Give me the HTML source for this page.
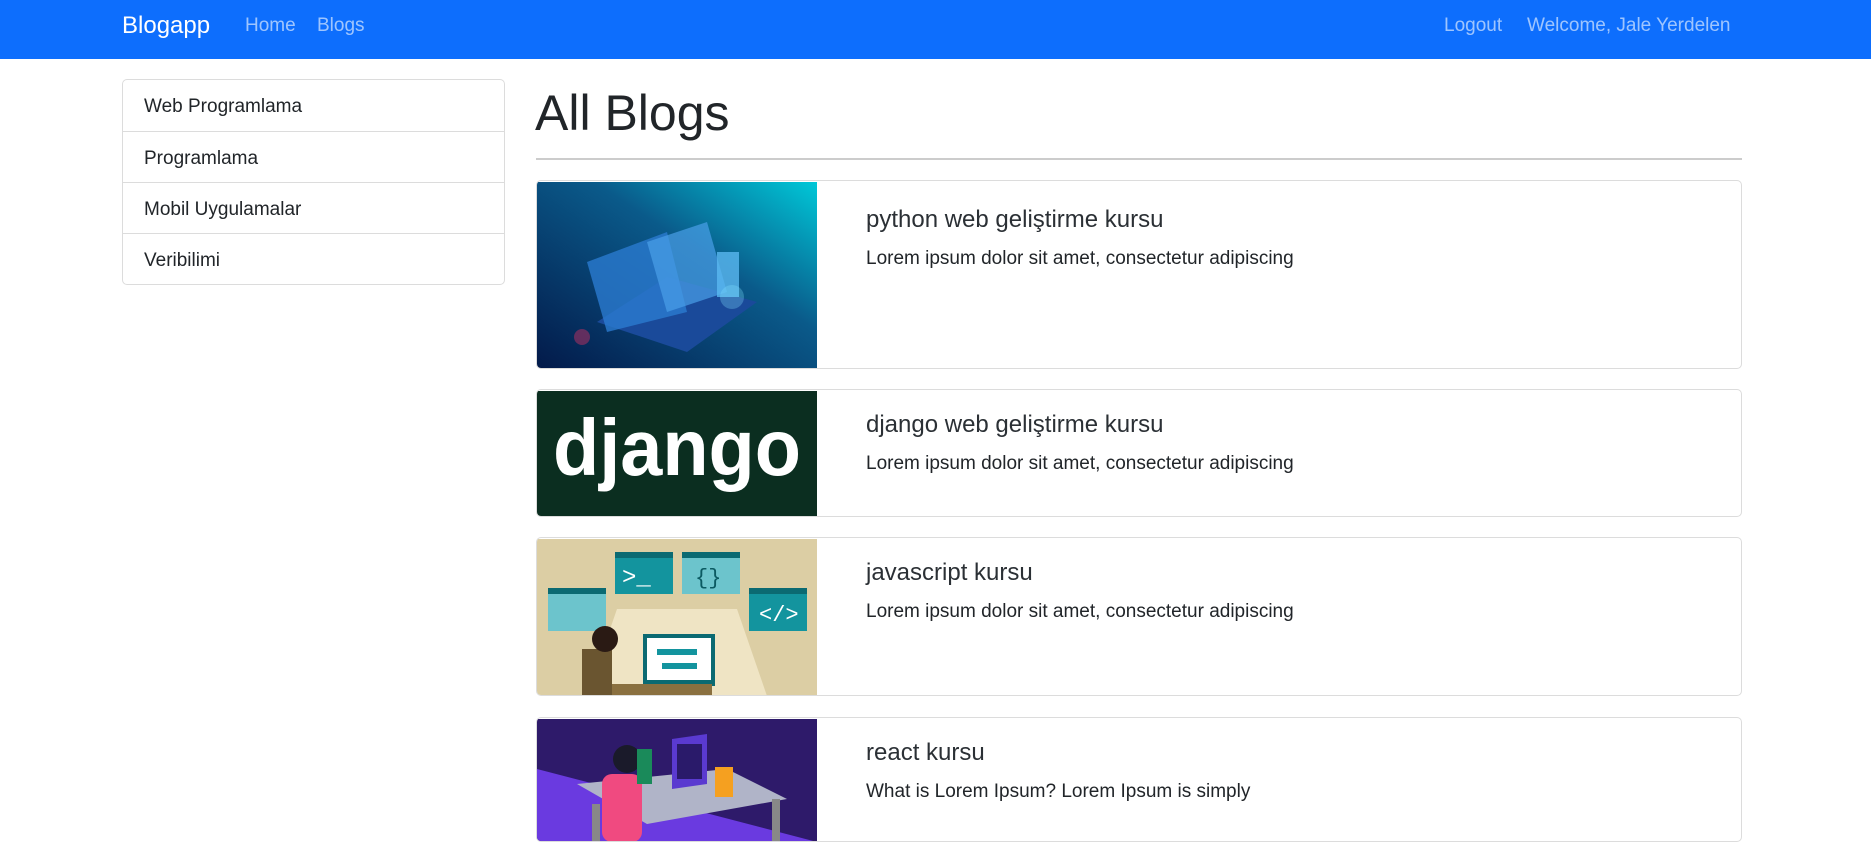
<!DOCTYPE html>
<html><head><meta charset="utf-8"><style>
*{box-sizing:border-box;margin:0;padding:0}
body{width:1871px;height:859px;overflow:hidden;background:#fff;font-family:"Liberation Sans",sans-serif;color:#212529;position:relative}
.nav{position:absolute;left:0;top:0;width:1871px;height:59px;background:#0d6efd}
.nav span{position:absolute;top:15px;font-size:19px;color:rgba(255,255,255,.6);white-space:nowrap}
.nav .brand{font-size:24px;color:#fff;top:12px}
.list{position:absolute;left:122px;top:79px;width:383px;border:1px solid #dcdcdc;border-radius:5px}
.list div{height:51px;line-height:53px;padding-left:21px;font-size:19px;border-top:1px solid #dcdcdc}
.list div:first-child{border-top:none}
h1{position:absolute;left:535px;top:84px;font-size:50px;font-weight:normal}
.hr{position:absolute;left:536px;top:158px;width:1206px;height:2px;background:#ccc}
.card{position:absolute;left:536px;width:1206px;border:1px solid #dcdcdc;border-radius:5px;overflow:hidden}
.card svg{position:absolute;left:0;top:1px}
.card h5{position:absolute;left:329px;font-size:24px;font-weight:normal;color:#2b3035}
.card p{position:absolute;left:329px;font-size:19px}
</style></head><body>
<div class="nav">
<span class="brand" style="left:122px">Blogapp</span>
<span style="left:245px">Home</span>
<span style="left:317px">Blogs</span>
<span style="left:1444px">Logout</span>
<span style="left:1527px">Welcome, Jale Yerdelen</span>
</div>
<div class="list"><div>Web Programlama</div><div>Programlama</div><div>Mobil Uygulamalar</div><div>Veribilimi</div></div>
<h1>All Blogs</h1>
<div class="hr"></div>

<div class="card" style="top:180px;height:189px">
<svg width="280" height="186"><defs><linearGradient id="g1" x1="0" y1="1" x2="1" y2="0"><stop offset="0" stop-color="#031a4a"/><stop offset="0.6" stop-color="#0a5a8a"/><stop offset="1" stop-color="#00c8d8"/></linearGradient></defs>
<rect width="280" height="186" fill="url(#g1)"/>
<polygon points="60,140 150,170 220,120 130,95" fill="#1a4a9a"/>
<polygon points="50,80 130,50 150,130 70,150" fill="#2a7ad0" opacity=".8"/>
<polygon points="110,60 170,40 190,110 130,130" fill="#4aa0e8" opacity=".7"/>
<rect x="180" y="70" width="22" height="45" fill="#5ab8f0" opacity=".8"/>
<circle cx="45" cy="155" r="8" fill="#a03060" opacity=".6"/><circle cx="195" cy="115" r="12" fill="#80e0ff" opacity=".3"/>
</svg>
<h5 style="top:25px">python web geliştirme kursu</h5>
<p style="top:67px">Lorem ipsum dolor sit amet, consectetur adipiscing</p>
</div>

<div class="card" style="top:389px;height:128px">
<svg width="280" height="126"><rect width="280" height="126" fill="#0b2e20"/>
<text x="140" y="84" text-anchor="middle" font-family="Liberation Sans" font-weight="bold" font-size="80" fill="#fff" textLength="248" lengthAdjust="spacingAndGlyphs">django</text></svg>
<h5 style="top:21px">django web geliştirme kursu</h5>
<p style="top:63px">Lorem ipsum dolor sit amet, consectetur adipiscing</p>
</div>

<div class="card" style="top:537px;height:159px">
<svg width="280" height="157"><rect width="280" height="157" fill="#dccea4"/>
<polygon points="80,70 200,70 230,157 50,157" fill="#efe4c4"/>
<rect x="78" y="13" width="58" height="42" fill="#13949e"/><rect x="78" y="13" width="58" height="6" fill="#0b6a72"/>
<text x="85" y="45" font-size="24" fill="#fff" font-family="Liberation Mono">&gt;_</text>
<rect x="145" y="13" width="58" height="42" fill="#6cc4cc"/><rect x="145" y="13" width="58" height="6" fill="#0b6a72"/>
<text x="158" y="45" font-size="22" fill="#0b5a62" font-family="Liberation Mono">{}</text>
<rect x="11" y="49" width="58" height="43" fill="#6cc4cc"/><rect x="11" y="49" width="58" height="6" fill="#0b6a72"/>
<rect x="212" y="49" width="58" height="43" fill="#13949e"/><rect x="212" y="49" width="58" height="6" fill="#0b6a72"/>
<text x="222" y="82" font-size="22" fill="#fff" font-family="Liberation Mono">&lt;/&gt;</text>
<rect x="106" y="95" width="72" height="52" fill="#0b6a72"/><rect x="110" y="99" width="64" height="42" fill="#fff"/>
<rect x="120" y="110" width="40" height="6" fill="#13949e"/><rect x="125" y="124" width="35" height="6" fill="#13949e"/>
<rect x="55" y="145" width="120" height="12" fill="#8a7040"/>
<rect x="45" y="110" width="30" height="47" fill="#6a5530"/><circle cx="68" cy="100" r="13" fill="#2a1a14"/>
</svg>
<h5 style="top:21px">javascript kursu</h5>
<p style="top:63px">Lorem ipsum dolor sit amet, consectetur adipiscing</p>
</div>

<div class="card" style="top:717px;height:125px">
<svg width="280" height="123"><rect width="280" height="123" fill="#2e1a6a"/>
<polygon points="0,50 280,123 0,123" fill="#6a3ae0"/>
<polygon points="40,65 190,50 250,80 110,105" fill="#b0b4c8"/>
<rect x="55" y="85" width="8" height="38" fill="#888"/><rect x="235" y="80" width="8" height="43" fill="#888"/>
<polygon points="135,20 170,15 170,65 135,70" fill="#5a3ad0"/><rect x="140" y="25" width="25" height="35" fill="#2a1a6a"/>
<rect x="178" y="48" width="18" height="30" fill="#f5a020"/>
<rect x="65" y="55" width="40" height="68" rx="10" fill="#f04a80"/><circle cx="90" cy="40" r="14" fill="#1a1a2a"/>
<rect x="100" y="30" width="15" height="35" fill="#1a8a5a"/>
</svg>
<h5 style="top:21px">react kursu</h5>
<p style="top:63px">What is Lorem Ipsum? Lorem Ipsum is simply</p>
</div>
</body></html>
